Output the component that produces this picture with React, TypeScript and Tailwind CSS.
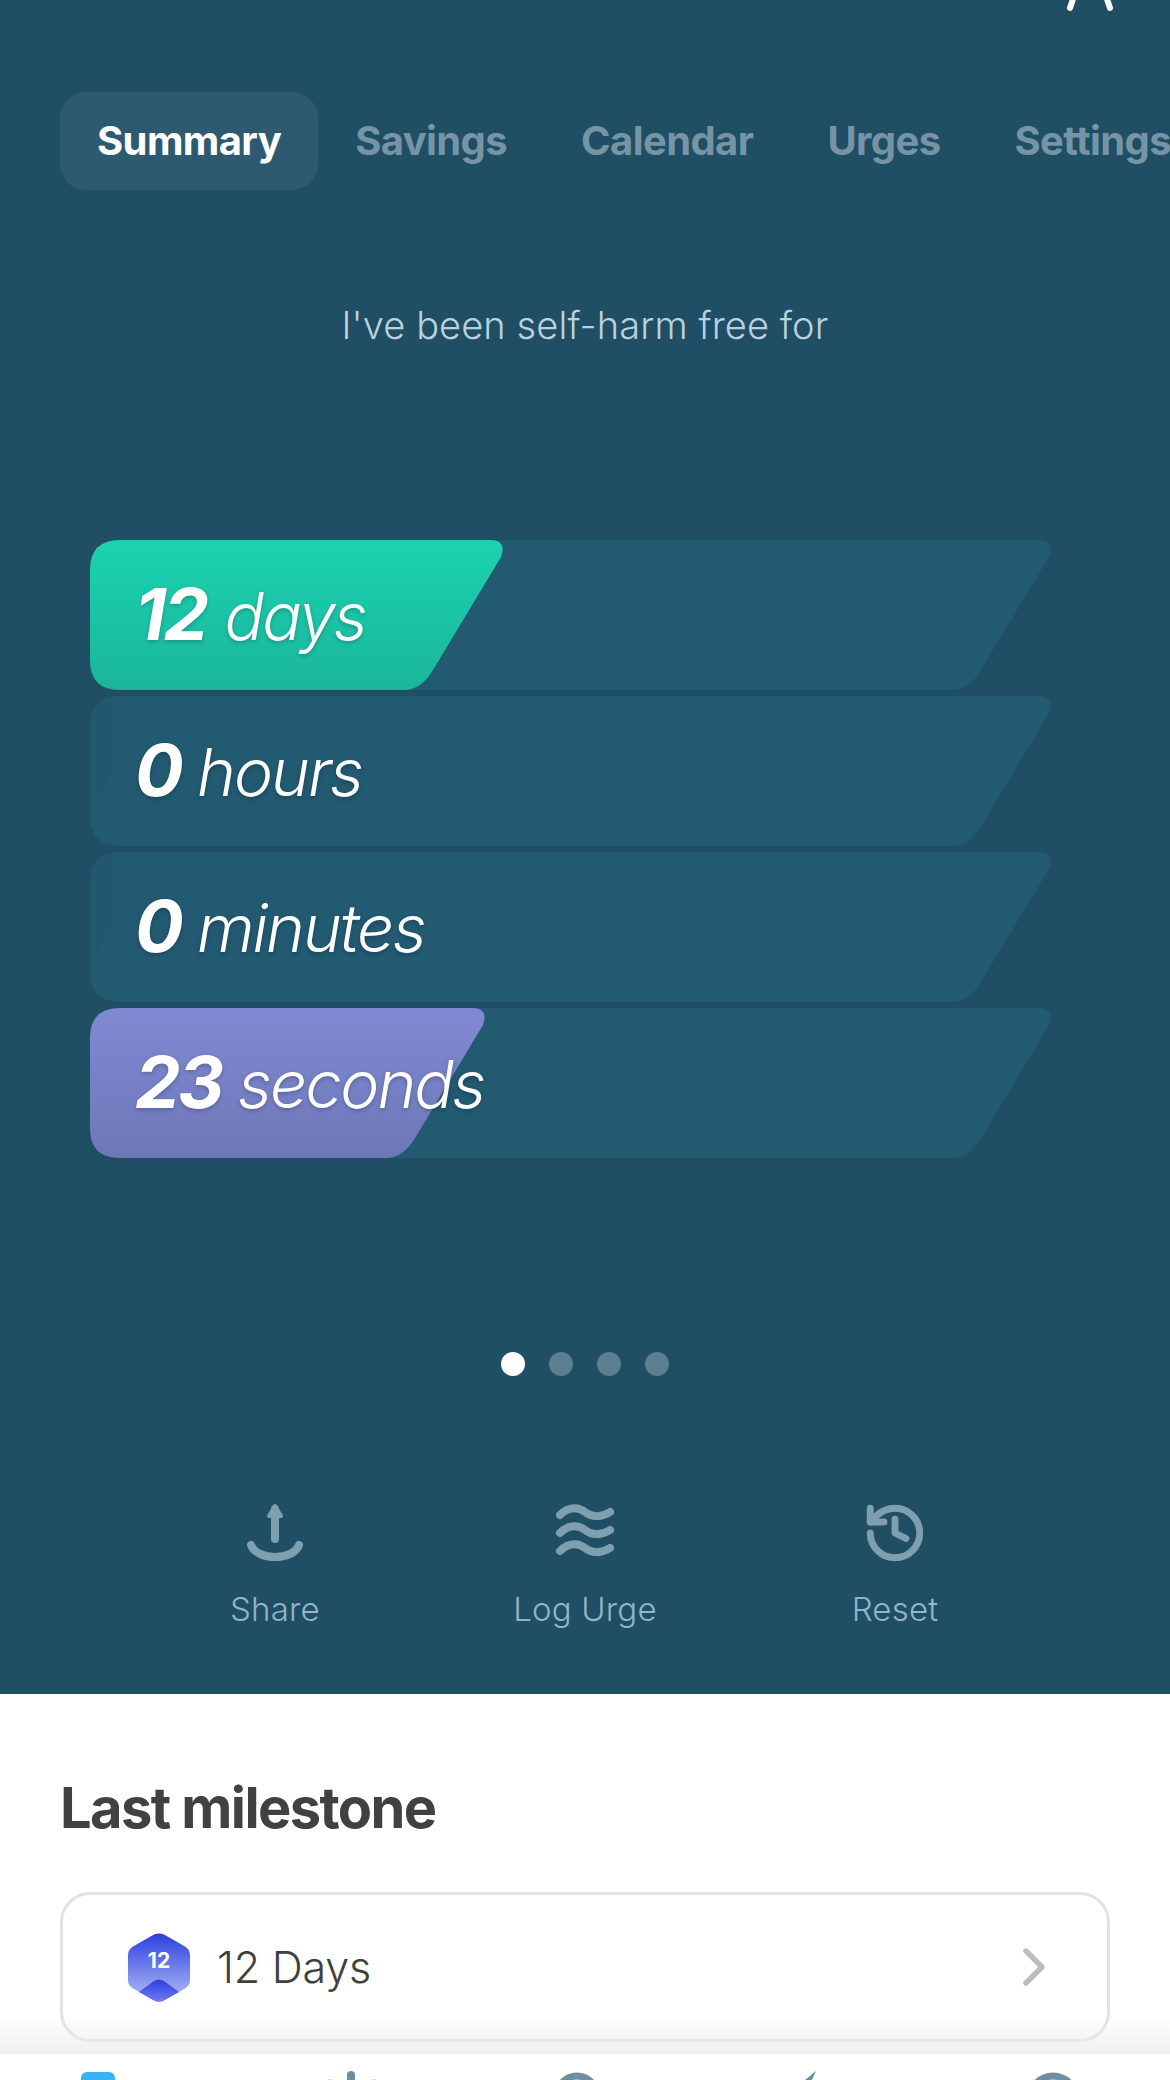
import React from 'react';
import { ChevronRight, History } from 'lucide-react';

const tabs = ['Summary', 'Savings', 'Calendar', 'Urges', 'Settings'];

const TRACK = "absolute inset-0 bg-[#225a72] [clip-path:path('M30_0H948Q965_0_959_17L891_130Q879_150_862_150H30Q0_150_0_120V30Q0_0_30_0Z')]";
const SLIVER = "absolute inset-0 bg-[#23576e] [clip-path:path('M30_0Q0_0_0_30V112L22_76V0Z')]";
const GREEN = "absolute inset-y-0 left-0 w-[414px] bg-gradient-to-b from-[#1cd3b0] to-[#1ab59b] [clip-path:path('M30_0H400Q417_0_411_17L343_130Q331_150_314_150H30Q0_150_0_120V30Q0_0_30_0Z')]";
const PURPLE = "absolute inset-y-0 left-0 w-[396px] bg-gradient-to-b from-[#8089d3] to-[#6d78b7] [clip-path:path('M30_0H382Q399_0_393_17L325_130Q313_150_296_150H30Q0_150_0_120V30Q0_0_30_0Z')]";

const TimeRow = ({ value, unit, fill, gap }: { value: string; unit: string; fill: string; gap: string }) => (
    <div className="relative h-[150px]">
        <div className={TRACK} />
        <div className={fill} />
        <div className={`relative flex h-full items-baseline pl-[45px] pt-[38px] italic leading-none text-white [text-shadow:0_2px_4px_rgba(0,0,0,0.22)] ${gap}`}>
            <span className="text-[72px] font-bold tracking-[-2.5px]">{value}</span>
            <span className="text-[66px] font-light tracking-[-2px]">{unit}</span>
        </div>
    </div>
);

const ShareIcon = () => (
    <svg width="60" height="60" viewBox="0 0 60 60" fill="none" stroke="#7d9fb0" strokeWidth="8" strokeLinecap="round" strokeLinejoin="round">
        <path d="M30 36V6" />
        <path d="M24 13L30 3L36 13Z" fill="#7d9fb0" strokeWidth="4" />
        <path d="M6 42C12 58 48 58 54 42" />
    </svg>
);

const WavesIcon = () => (
    <svg width="60" height="60" viewBox="0 0 60 60" fill="none" stroke="#7d9fb0" strokeWidth="8" strokeLinecap="round">
        <path d="M5 12C14 3 24 4 30 9C36 14 46 15 55 9" />
        <path d="M5 30C14 21 24 22 30 27C36 32 46 33 55 27" />
        <path d="M5 48C14 39 24 40 30 45C36 50 46 51 55 45" />
    </svg>
);

const PersonLegs = () => (
    <svg width="50" height="12" viewBox="0 0 50 12" fill="none" stroke="white" strokeWidth="6" strokeLinecap="round">
        <path d="M9 -4L5 8" />
        <path d="M41 -4L45 8" />
    </svg>
);

const Badge = () => (
    <svg width="62" height="69" viewBox="0 0 62 69">
        <defs>
            <linearGradient id="hexBody" x1="0" y1="0" x2="0" y2="1">
                <stop offset="0" stopColor="#2c3fe0" />
                <stop offset="1" stopColor="#b4bff7" />
            </linearGradient>
            <linearGradient id="hexBase" x1="0" y1="0" x2="0" y2="1">
                <stop offset="0" stopColor="#2c3fe0" />
                <stop offset="1" stopColor="#6d7df2" />
            </linearGradient>
        </defs>
        <path d="M26 1.5Q31 -0.5 36 1.5L57 13.5Q62 16.5 62 22V47Q62 52.5 57 55.5L36 67.5Q31 70 26 67.5L5 55.5Q0 52.5 0 47V22Q0 16.5 5 13.5Z" fill="url(#hexBody)" />
        <path d="M11 59L26 48Q31 45 36 48L51 59L36 67.5Q31 70 26 67.5Z" fill="url(#hexBase)" />
        <text x="31" y="35" textAnchor="middle" fontFamily="Inter" fontWeight="700" fontSize="21" fill="white">12</text>
    </svg>
);

const NavSlivers = () => (
    <div className="grid h-[26px] grid-cols-5 justify-items-center overflow-hidden bg-white pt-[17px]">
        <svg width="90" height="9" viewBox="0 0 90 9"><rect x="9" y="1" width="34" height="16" rx="6" fill="#35b5f5" /></svg>
        <svg width="90" height="9" viewBox="0 0 90 9" fill="#6f8f9f">
            <rect x="41" y="0" width="8" height="16" rx="4" />
            <rect x="22" y="8" width="5" height="3" opacity="0.25" />
            <rect x="65" y="8" width="5" height="3" opacity="0.25" />
        </svg>
        <svg width="90" height="9" viewBox="0 0 90 9" fill="none" stroke="#6f8f9f" strokeWidth="7"><circle cx="37" cy="25" r="20" /></svg>
        <svg width="90" height="9" viewBox="0 0 90 9"><path d="M42 0L31 9H38Z" fill="#6f8f9f" /></svg>
        <svg width="90" height="9" viewBox="0 0 90 9" fill="none" stroke="#6f8f9f" strokeWidth="7"><circle cx="45" cy="28" r="23" /></svg>
    </div>
);

export default function App() {
    return (
        <div className="flex h-[2080px] w-[1170px] flex-col overflow-hidden bg-white font-[Inter,sans-serif]">
            {/* TOP PANEL */}
            <div className="flex h-[1694px] shrink-0 flex-col bg-[#204e65]">
                <div className="flex h-[46px] justify-end border-b border-[#234f66] pr-[55px]">
                    <PersonLegs />
                </div>

                {/* TABS */}
                <div className="mt-[46px] flex pl-[60px] whitespace-nowrap">
                    {tabs.map((tab, i) => (
                        <div
                            key={tab}
                            className={`flex h-[98px] items-center rounded-[26px] px-[37px] text-[40px] font-bold tracking-[-0.6px] ${i === 0 ? 'bg-[#2d5a70] text-white' : 'text-[#7595a6]'}`}
                        >
                            {tab}
                        </div>
                    ))}
                </div>

                <div className="mt-[112px] text-center text-[38px] leading-[46px] font-light tracking-[0.1px] text-[#b9d2de]">
                    I've been self-harm free for
                </div>

                {/* COUNTERS */}
                <div className="mt-[192px] ml-[90px] flex w-[962px] flex-col gap-[6px] self-start">
                    <TimeRow value="12" unit="days" fill={GREEN} gap="gap-[18px]" />
                    <TimeRow value="0" unit="hours" fill={SLIVER} gap="gap-[16px]" />
                    <TimeRow value="0" unit="minutes" fill={SLIVER} gap="gap-[16px]" />
                    <TimeRow value="23" unit="seconds" fill={PURPLE} gap="gap-[16px]" />
                </div>

                {/* PAGER */}
                <div className="mt-[194px] flex justify-center gap-6">
                    <div className="h-6 w-6 rounded-full bg-white" />
                    <div className="h-6 w-6 rounded-full bg-[#5d7f91]" />
                    <div className="h-6 w-6 rounded-full bg-[#5d7f91]" />
                    <div className="h-6 w-6 rounded-full bg-[#5d7f91]" />
                </div>

                {/* ACTIONS */}
                <div className="mt-[127px] grid grid-cols-3 px-[120px] text-[33px] font-light tracking-[0.2px] text-[#93b5c6]">
                    <div className="flex flex-col items-center gap-[26px]">
                        <ShareIcon />
                        <span className="leading-[40px]">Share</span>
                    </div>
                    <div className="flex flex-col items-center gap-[26px]">
                        <WavesIcon />
                        <span className="leading-[40px]">Log Urge</span>
                    </div>
                    <div className="flex flex-col items-center gap-[26px]">
                        <div className="flex h-[60px] items-center">
                            <History size={66} strokeWidth={2.5} color="#7d9fb0" />
                        </div>
                        <span className="leading-[40px]">Reset</span>
                    </div>
                </div>
            </div>

            {/* MILESTONE */}
            <div className="relative flex-1 px-[60px] pt-[83px]">
                <h2 className="text-[56px] leading-[62px] font-bold tracking-[-1.6px] text-[#414141]">Last milestone</h2>
                <div className="mt-[53px] flex h-[150px] items-center rounded-[30px] border-[3px] border-[#e2e2e2] pr-[41px] pl-[65px]">
                    <Badge />
                    <span className="ml-[27px] flex-1 text-[43px] font-light tracking-[-0.2px] text-[#3f3f3f]">12 Days</span>
                    <ChevronRight size={64} strokeWidth={2} color="#bcbcbc" />
                </div>
                <div className="absolute inset-x-0 bottom-0 h-[40px] bg-gradient-to-b from-transparent to-[#ececec]/80" />
            </div>

            <NavSlivers />
        </div>
    );
}
